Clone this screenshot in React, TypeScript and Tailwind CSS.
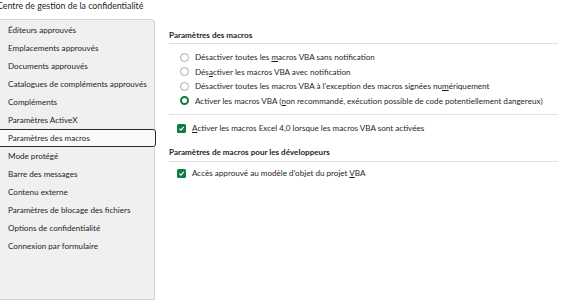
import React from "react";

const menuItems = [
  "Éditeurs approuvés",
  "Emplacements approuvés",
  "Documents approuvés",
  "Catalogues de compléments approuvés",
  "Compléments",
  "Paramètres ActiveX",
  "Paramètres des macros",
  "Mode protégé",
  "Barre des messages",
  "Contenu externe",
  "Paramètres de blocage des fichiers",
  "Options de confidentialité",
  "Connexion par formulaire",
];

const Radio = ({ checked }: { checked?: boolean }) =>
  checked ? (
    <span className="w-[9px] h-[9px] rounded-full border-[2.5px] border-[#107c41] bg-white shrink-0" />
  ) : (
    <span className="w-[9px] h-[9px] rounded-full border border-[#a8a8a8] bg-white shrink-0" />
  );

const Check = () => (
  <span className="w-[9px] h-[9px] rounded-[1.5px] bg-[#107c41] flex items-center justify-center shrink-0">
    <svg width="7" height="7" viewBox="0 0 10 10">
      <path d="M2 5.2 L4.2 7.3 L8.2 2.8" fill="none" stroke="white" strokeWidth="1.6" />
    </svg>
  </span>
);

export default function App() {
  return (
    <div
      className="w-[567px] h-[300px] bg-white text-[#1f1f1f] text-[8.1px] overflow-hidden flex flex-col whitespace-nowrap"
      style={{ fontFamily: "Lato, sans-serif" }}
    >
      <div className="h-[19px] leading-[11px] -ml-[3px] text-[8.8px]">
        Centre de gestion de la confidentialité
      </div>
      <div className="flex flex-1">
        {/* sidebar */}
        <div className="w-[159px] shrink-0 -ml-[4px] bg-[#f0f0f0] border border-[#d4d4d4] rounded-tr-[4px] pt-[1px]">
          {menuItems.map((item) =>
            item === "Paramètres des macros" ? (
              <div
                key={item}
                className="h-[18px] flex items-center pl-[10px] bg-[#fafafa] border-[1.5px] border-[#2a2a2a] rounded-[3px] -mr-[2px]"
              >
                {item}
              </div>
            ) : (
              <div key={item} className="h-[18px] flex items-center pl-[11px]">
                {item}
              </div>
            )
          )}
        </div>
        {/* content */}
        <div className="flex-1 pl-[14px] pr-[9px] pt-[8px]">
          <div className="font-bold h-[16px] flex items-center">Paramètres des macros</div>
          <div className="border-t border-[#e0e0e0]" />
          <div className="pl-[11px] pt-[6px] flex flex-col">
            <div className="h-[14.5px] flex items-center gap-[6px]">
              <Radio />
              <span>
                Désactiver toutes les <u>m</u>acros VBA sans notification
              </span>
            </div>
            <div className="h-[14.5px] flex items-center gap-[6px]">
              <Radio />
              <span>
                Dés<u>a</u>ctiver les macros VBA avec notification
              </span>
            </div>
            <div className="h-[14.5px] flex items-center gap-[6px]">
              <Radio />
              <span>
                Désactiver toutes les macros VBA à l'exception des macros signées nu<u>m</u>ériquement
              </span>
            </div>
            <div className="h-[14.5px] flex items-center gap-[6px]">
              <Radio checked />
              <span>
                Activer les macros VBA (<u>n</u>on recommandé, exécution possible de code potentiellement dangereux)
              </span>
            </div>
          </div>
          <div className="border-t border-[#e0e0e0] mt-[6px]" />
          <div className="pl-[8px] h-[26px] flex items-center gap-[6px]">
            <Check />
            <span>
              <u>A</u>ctiver les macros Excel 4,0 lorsque les macros VBA sont activées
            </span>
          </div>
          <div className="font-bold h-[18px] flex items-center mt-[2px]">
            Paramètres de macros pour les développeurs
          </div>
          <div className="border-t border-[#e0e0e0]" />
          <div className="pl-[8px] h-[22px] flex items-center gap-[6px]">
            <Check />
            <span>
              Accès approuvé au modèle d'objet du projet <u>V</u>BA
            </span>
          </div>
        </div>
      </div>
    </div>
  );
}
